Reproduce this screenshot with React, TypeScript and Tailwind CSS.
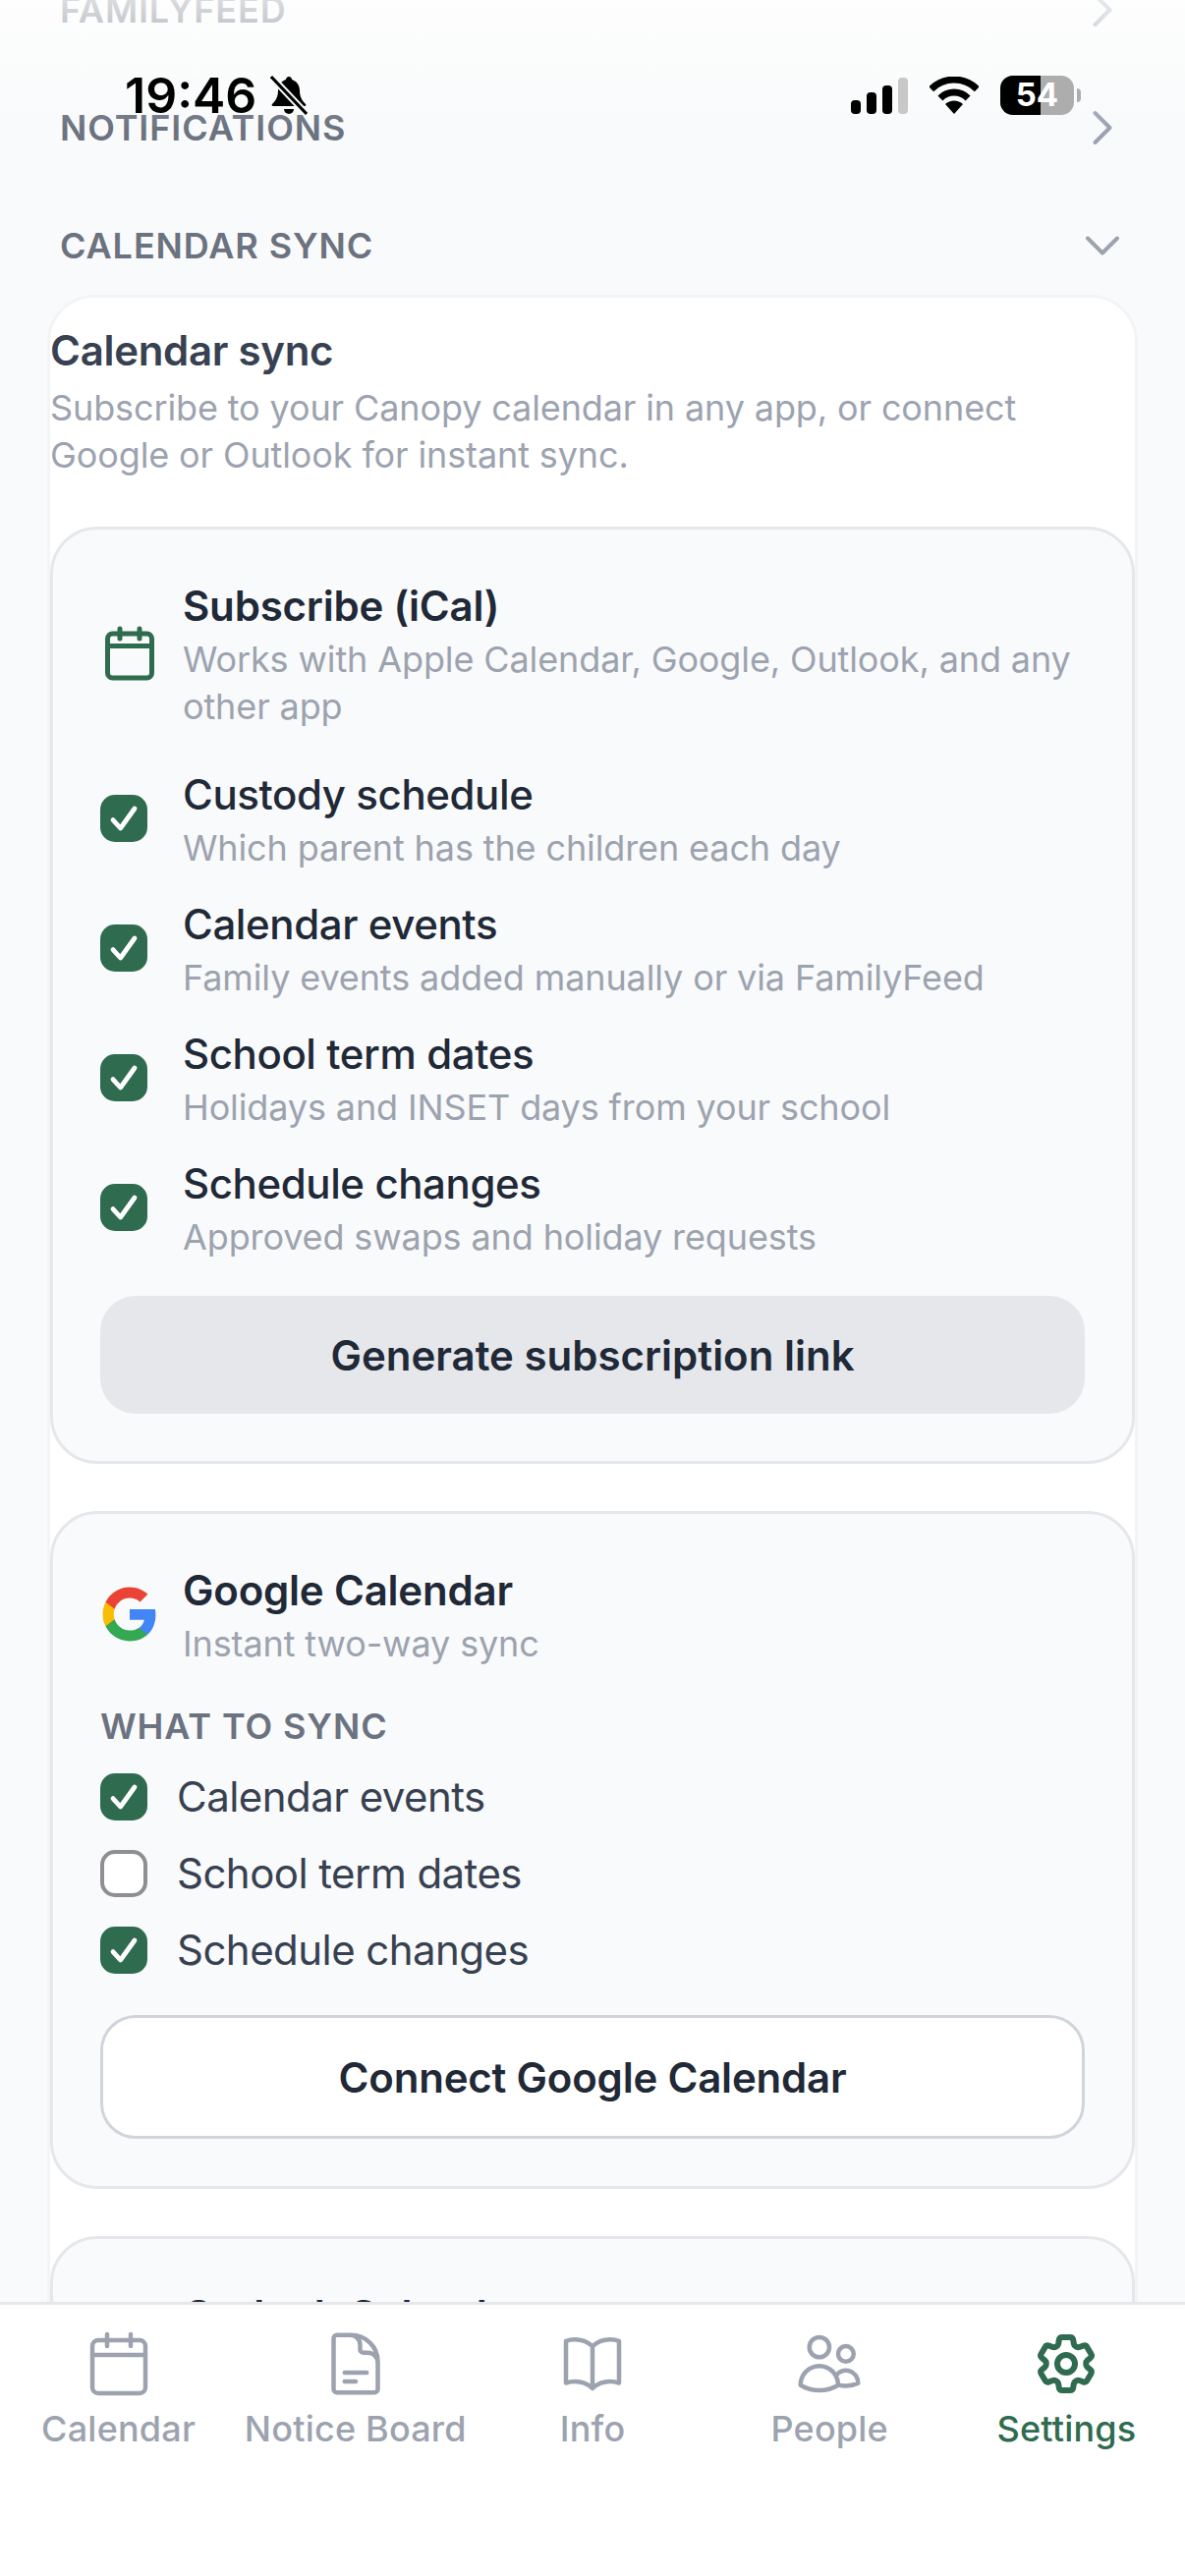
import {
  HiOutlineBookOpen,
  HiOutlineChevronDown,
  HiOutlineChevronRight,
  HiOutlineCog6Tooth,
  HiOutlineDocumentText,
  HiOutlineUsers,
} from 'react-icons/hi2'

const feeds = [
  { title: 'Custody schedule', sub: 'Which parent has the children each day' },
  { title: 'Calendar events', sub: 'Family events added manually or via FamilyFeed' },
  { title: 'School term dates', sub: 'Holidays and INSET days from your school' },
  { title: 'Schedule changes', sub: 'Approved swaps and holiday requests' },
]

const googleFeeds = [
  { title: 'Calendar events', checked: true },
  { title: 'School term dates', checked: false },
  { title: 'Schedule changes', checked: true },
]

const CalendarIcon = ({ size, strokeWidth = 1.5, className }: { size: number; strokeWidth?: number; className?: string }) => (
  <svg viewBox="0 0 24 24" width={size} height={size} className={className} fill="none" stroke="currentColor" strokeWidth={strokeWidth} strokeLinecap="round" strokeLinejoin="round">
    <rect x="3" y="4" width="18" height="18" rx="2" />
    <path d="M8 2v4M16 2v4M3 9h18" />
  </svg>
)

const tabs = [
  { label: 'Calendar', Icon: CalendarIcon },
  { label: 'Notice Board', Icon: HiOutlineDocumentText },
  { label: 'Info', Icon: HiOutlineBookOpen },
  { label: 'People', Icon: HiOutlineUsers },
  { label: 'Settings', Icon: HiOutlineCog6Tooth, active: true },
]

const Checkbox = ({ checked = true }: { checked?: boolean }) => {
  if (!checked) {
    return <div className="h-[48px] w-[48px] shrink-0 rounded-[15px] border-[4px] border-[#8e8e93] bg-white" />
  }
  return (
    <div className="h-[48px] w-[48px] shrink-0 rounded-[15px] bg-[#2f6b4f]">
      <svg viewBox="0 0 24 24" className="h-[48px] w-[48px]" fill="none" stroke="white" strokeWidth="2.4" strokeLinecap="round" strokeLinejoin="round">
        <path d="M6.5 12.8l3.8 4.2L17.5 7" />
      </svg>
    </div>
  )
}

const GoogleLogo = () => (
  <svg viewBox="0 0 24 24" className="h-[60px] w-[60px] shrink-0">
    <path fill="#4285F4" d="M22.56 12.25c0-.78-.07-1.53-.2-2.25H12v4.26h5.92c-.26 1.37-1.04 2.53-2.21 3.31v2.77h3.57c2.08-1.92 3.28-4.74 3.28-8.09z" />
    <path fill="#34A853" d="M12 23c2.97 0 5.46-.98 7.28-2.66l-3.57-2.77c-.98.66-2.23 1.06-3.71 1.06-2.86 0-5.29-1.93-6.16-4.53H2.18v2.84C3.99 20.53 7.7 23 12 23z" />
    <path fill="#FBBC05" d="M5.84 14.09c-.22-.66-.35-1.36-.35-2.09s.13-1.43.35-2.09V7.07H2.18C1.43 8.55 1 10.22 1 12s.43 3.45 1.18 4.93l2.85-2.22.81-.62z" />
    <path fill="#EA4335" d="M12 5.38c1.62 0 3.06.56 4.21 1.64l3.15-3.15C17.45 2.09 14.97 1 12 1 7.7 1 3.99 3.47 2.18 7.07l3.66 2.84c.87-2.6 3.3-4.53 6.16-4.53z" />
  </svg>
)

const SectionRow = ({ title, open }: { title: string; open?: boolean }) => (
  <div className="flex h-[100px] items-center justify-between pl-[61px] pr-[60px]">
    <span className="text-[36px] font-semibold tracking-[0.9px] text-[#6b7280]">{title}</span>
    {open ? (
      <HiOutlineChevronDown size={48} strokeWidth={2} className="text-[#9ca3af]" />
    ) : (
      <HiOutlineChevronRight size={48} strokeWidth={2} className="text-[#9ca3af]" />
    )}
  </div>
)

const StatusBar = () => (
  <div className="absolute inset-x-0 top-0 h-[130px] bg-gradient-to-b from-white/75 to-transparent">
    <div className="flex items-center justify-between pl-[127px] pr-[106px] pt-[77px]">
      <div className="flex h-[40px] items-center gap-[14px]">
        <span className="text-[50px] font-semibold leading-none text-black">19:46</span>
        <svg viewBox="0 0 38 40" className="h-[40px] w-[38px]">
          <path d="M19 1c-2 0-3 1.5-3 3-5 1.5-8 6-8 11 0 6-2 10-6 14-1 1 0 2 1 2h32c1 0 2-1 1-2-4-4-6-8-6-14 0-5-3-9.500-8-11 0-1.500-1-3-3-3z" />
          <path d="M14 34a5 5 0 0 0 10 0z" />
          <path d="M2 2l34 36" stroke="#fafbfc" strokeWidth="7" />
          <path d="M1 1l36 38" stroke="black" strokeWidth="3" />
        </svg>
      </div>
      <div className="flex items-center gap-[22px]">
        <svg viewBox="0 0 58 37" className="h-[37px] w-[58px]">
          <rect x="0" y="23" width="10" height="14" rx="4" />
          <rect x="16" y="15" width="10" height="22" rx="4" />
          <rect x="32" y="8" width="10" height="29" rx="4" />
          <rect x="48" y="0" width="10" height="37" rx="4" fill="#c8c8c8" />
        </svg>
        <svg viewBox="0 0 50 38" className="h-[38px] w-[50px]" fill="none" stroke="black" strokeWidth="7">
          <path d="M1.700 12.700A33 33 0 0 1 48.300 12.700" />
          <path d="M10.900 21.900A20 20 0 0 1 39.100 21.900" />
          <path d="M25 38L16 28A13 13 0 0 1 34 28Z" fill="black" stroke="none" />
        </svg>
        <div className="flex items-center gap-[3px]">
          <div className="relative h-[40px] w-[75px] overflow-hidden rounded-[13px] bg-[#adadad]">
            <div className="h-full w-[41px] bg-black" />
            <span className="absolute inset-0 flex items-center justify-center text-[33px] font-bold text-white">54</span>
          </div>
          <div className="h-[14px] w-[4px] rounded-r-full bg-[#adadad]" />
        </div>
      </div>
    </div>
  </div>
)

const App = () => {
  return (
    <div className="relative flex h-[2622px] w-[1206px] flex-col overflow-hidden bg-[#f9fafb] font-['Inter',sans-serif]">
      <main className="min-h-0 flex-1 overflow-hidden">
        <div className="-mt-[40px] flex flex-col gap-[20px]">
          <SectionRow title="FAMILYFEED" />
          <SectionRow title="NOTIFICATIONS" />
          <SectionRow title="CALENDAR SYNC" open />
        </div>

        <div className="mx-[48px] rounded-[48px] border-[3px] border-[#f3f4f6] bg-white pt-[24px]">
          <h3 className="text-[42px] font-semibold leading-[60px] tracking-[-0.3px] text-[#374151]">Calendar sync</h3>
          <p className="mt-[4px] text-[36px] leading-[48px] tracking-[-0.12px] text-[#9ca3af]">
            Subscribe to your Canopy calendar in any app, or connect
            <br />
            Google or Outlook for instant sync.
          </p>

          <section className="mt-[49px] rounded-[48px] border-[3px] border-[#e5e7eb] bg-[#f9fafb] p-[48px]">
            <div className="flex items-center gap-[24px]">
              <CalendarIcon size={60} strokeWidth={2} className="shrink-0 text-[#2f6b4f]" />
              <div>
                <h4 className="text-[42px] font-semibold leading-[60px] tracking-[-0.2px] text-[#1f2937]">Subscribe (iCal)</h4>
                <p className="text-[36px] leading-[48px] tracking-[-0.12px] text-[#9ca3af]">
                  Works with Apple Calendar, Google, Outlook, and any other app
                </p>
              </div>
            </div>
            <div className="mt-[36px] flex flex-col gap-[24px]">
              {feeds.map((feed) => (
                <div key={feed.title} className="flex items-center gap-[36px]">
                  <Checkbox />
                  <div>
                    <div className="text-[42px] font-medium leading-[60px] tracking-[-0.4px] text-[#1f2937]">{feed.title}</div>
                    <div className="text-[36px] leading-[48px] tracking-[-0.12px] text-[#9ca3af]">{feed.sub}</div>
                  </div>
                </div>
              ))}
            </div>
            <button className="mt-[36px] h-[120px] w-full rounded-[36px] bg-[#e5e7eb] text-[42px] font-semibold text-[#1f2937]">
              Generate subscription link
            </button>
          </section>

          <section className="mt-[48px] rounded-[48px] border-[3px] border-[#e5e7eb] bg-[#f9fafb] p-[48px]">
            <div className="flex items-center gap-[24px]">
              <GoogleLogo />
              <div>
                <h4 className="text-[42px] font-semibold leading-[60px] tracking-[-0.2px] text-[#1f2937]">Google Calendar</h4>
                <p className="text-[36px] leading-[48px] tracking-[-0.12px] text-[#9ca3af]">Instant two-way sync</p>
              </div>
            </div>
            <div className="mt-[36px] text-[36px] font-semibold leading-[48px] tracking-[0.9px] text-[#6b7280]">WHAT TO SYNC</div>
            <div className="mt-[18px] flex flex-col gap-[18px]">
              {googleFeeds.map((feed) => (
                <div key={feed.title} className="flex items-center gap-[30px]">
                  <Checkbox checked={feed.checked} />
                  <span className="text-[42px] leading-[60px] tracking-[-0.55px] text-[#374151]">{feed.title}</span>
                </div>
              ))}
            </div>
            <button className="mt-[36px] h-[126px] w-full rounded-[36px] border-[3px] border-[#d1d5db] bg-white text-[42px] font-semibold tracking-[-0.2px] text-[#1f2937]">
              Connect Google Calendar
            </button>
          </section>

          <section className="mt-[48px] h-[400px] rounded-[48px] border-[3px] border-[#e5e7eb] bg-[#f9fafb] p-[48px]">
            <div className="flex items-center gap-[24px]">
              <div className="h-[60px] w-[60px] shrink-0" />
              <h4 className="text-[42px] font-semibold leading-[60px] tracking-[-0.2px] text-[#1f2937]">Outlook Calendar</h4>
            </div>
          </section>
        </div>
      </main>

      <nav className="grid h-[279px] shrink-0 grid-cols-5 border-t-[3px] border-[#e5e7eb] bg-white pt-[24px]">
        {tabs.map(({ label, Icon, active }) => (
          <div key={label} className={active ? 'flex flex-col items-center text-[#2f6b4f]' : 'flex flex-col items-center text-[#9ca3af]'}>
            <Icon size={72} strokeWidth={active ? 2 : 1.5} />
            <span className="mt-[6px] whitespace-nowrap text-[36px] font-medium leading-[48px] tracking-[0.2px]">{label}</span>
          </div>
        ))}
      </nav>

      <StatusBar />
    </div>
  )
}

export default App
